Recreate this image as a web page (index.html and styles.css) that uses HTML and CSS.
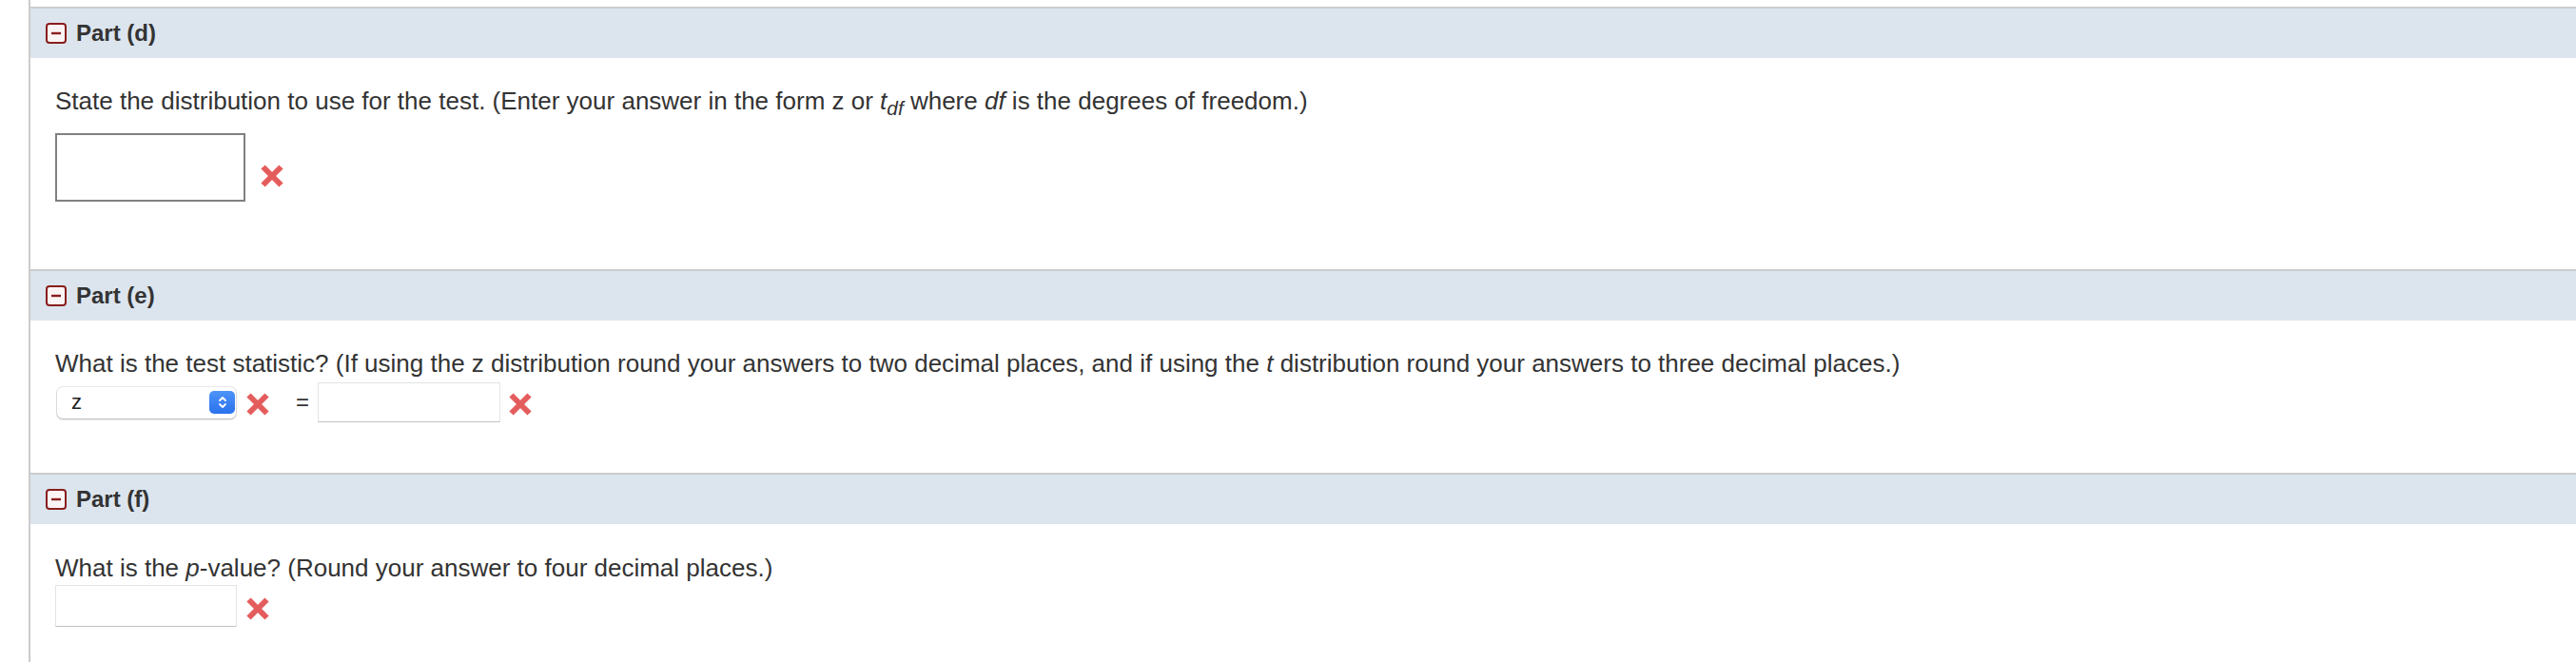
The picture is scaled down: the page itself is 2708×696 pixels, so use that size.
FILE: index.html
```html
<!DOCTYPE html>
<html>
<head>
<meta charset="utf-8">
<link rel="stylesheet" href="styles.css">
</head>
<body>
<div class="page">
  <section class="part part-d">
    <div class="part-head">
      <svg class="toggle" viewBox="0 0 22 22" width="22" height="22"><rect x="1" y="1" width="20" height="20" rx="3" fill="#fbf4f4" stroke="#8a1d1d" stroke-width="2"/><line x1="6" y1="11" x2="16" y2="11" stroke="#8a1d1d" stroke-width="2.4"/></svg>
      <span class="part-title">Part (d)</span>
    </div>
    <div class="part-body">
      <p class="question">State the distribution to use for the test. (Enter your answer in the form z or <i>t</i><sub><i>df</i></sub> where <i>df</i> is the degrees of freedom.)</p>
      <div class="answer-row row-d">
        <div class="box-input"></div>
        <svg class="xmark" viewBox="0 0 26 26" width="26" height="26"><path d="M3.5 3.5 L22.5 22.5 M22.5 3.5 L3.5 22.5" stroke="#e45d5d" stroke-width="6" fill="none"/></svg>
      </div>
    </div>
  </section>

  <section class="part part-e">
    <div class="part-head">
      <svg class="toggle" viewBox="0 0 22 22" width="22" height="22"><rect x="1" y="1" width="20" height="20" rx="3" fill="#fbf4f4" stroke="#8a1d1d" stroke-width="2"/><line x1="6" y1="11" x2="16" y2="11" stroke="#8a1d1d" stroke-width="2.4"/></svg>
      <span class="part-title">Part (e)</span>
    </div>
    <div class="part-body">
      <p class="question">What is the test statistic? (If using the z distribution round your answers to two decimal places, and if using the <i>t</i> distribution round your answers to three decimal places.)</p>
      <div class="answer-row row-e">
        <div class="select">
          <span class="select-value">z</span>
          <span class="stepper"><svg viewBox="0 0 12 18" width="12" height="18"><path d="M3 7 L6 4 L9 7 M3 11 L6 14 L9 11" stroke="#fff" stroke-width="1.8" fill="none" stroke-linecap="round" stroke-linejoin="round"/></svg></span>
        </div>
        <svg class="xmark" viewBox="0 0 26 26" width="26" height="26"><path d="M3.5 3.5 L22.5 22.5 M22.5 3.5 L3.5 22.5" stroke="#e45d5d" stroke-width="6" fill="none"/></svg>
        <span class="equals">=</span>
        <div class="text-input"></div>
        <svg class="xmark" viewBox="0 0 26 26" width="26" height="26"><path d="M3.5 3.5 L22.5 22.5 M22.5 3.5 L3.5 22.5" stroke="#e45d5d" stroke-width="6" fill="none"/></svg>
      </div>
    </div>
  </section>

  <section class="part part-f">
    <div class="part-head">
      <svg class="toggle" viewBox="0 0 22 22" width="22" height="22"><rect x="1" y="1" width="20" height="20" rx="3" fill="#fbf4f4" stroke="#8a1d1d" stroke-width="2"/><line x1="6" y1="11" x2="16" y2="11" stroke="#8a1d1d" stroke-width="2.4"/></svg>
      <span class="part-title">Part (f)</span>
    </div>
    <div class="part-body">
      <p class="question">What is the <i>p</i>-value? (Round your answer to four decimal places.)</p>
      <div class="answer-row row-f">
        <div class="text-input"></div>
        <svg class="xmark" viewBox="0 0 26 26" width="26" height="26"><path d="M3.5 3.5 L22.5 22.5 M22.5 3.5 L3.5 22.5" stroke="#e45d5d" stroke-width="6" fill="none"/></svg>
      </div>
    </div>
  </section>
</div>
</body>
</html>
```
FILE: styles.css
```css
html, body {
  margin: 0;
  padding: 0;
  background: #fff;
}
body {
  font-family: "Liberation Sans", Arial, Helvetica, sans-serif;
  color: #333;
}
.page {
  margin-left: 30px;
  border-left: 2px solid #cccccc;
  padding-top: 7px;
  min-height: 689px;
}
.part {
  border-top: 2px solid #cccccc;
}
.part-head {
  height: 52px;
  background: #dce5ee;
  display: flex;
  align-items: center;
  padding-left: 16px;
  gap: 10px;
}
.toggle {
  display: block;
  flex: none;
}
.part-title {
  font-weight: bold;
  font-size: 24px;
  color: #333;
}
.part-body {
  padding-left: 26px;
}
.question {
  margin: 0;
  font-size: 26px;
  line-height: 28px;
  color: #333;
}
.question sub {
  font-size: 0.8em;
  line-height: 0;
  vertical-align: -0.3em;
}
.answer-row {
  display: flex;
  align-items: center;
}
.xmark {
  display: block;
  flex: none;
}

/* Part d */
.part-d .part-body {
  height: 222px;
  padding-top: 31px;
  box-sizing: border-box;
}
.row-d {
  margin-top: 20px;
  align-items: flex-start;
}
.box-input {
  width: 200px;
  height: 72px;
  box-sizing: border-box;
  border: 2px solid #808080;
  background: #fff;
}
.row-d .xmark {
  margin-top: 32px;
  margin-left: 15px;
}

/* Part e */
.part-e .part-body {
  height: 160px;
  padding-top: 31px;
  box-sizing: border-box;
}
.row-e {
  margin-top: 6px;
  height: 42px;
}
.select {
  margin-left: 2px;
  width: 188px;
  height: 33px;
  box-sizing: border-box;
  border-radius: 6px;
  background: #fff;
  box-shadow: 0 0 0 1px rgba(0,0,0,0.08), 0 1px 2px rgba(0,0,0,0.25);
  display: flex;
  align-items: center;
  justify-content: space-between;
  padding: 0 1px 0 15px;
}
.select-value {
  font-size: 22px;
  color: #222;
}
.stepper {
  width: 27px;
  height: 24px;
  border-radius: 5px;
  background: linear-gradient(#4d93f8, #2b72ee);
  display: flex;
  align-items: center;
  justify-content: center;
}
.stepper svg {
  display: block;
}
.row-e .select + .xmark {
  margin-left: 10px;
  margin-top: 4px;
}
.equals {
  margin-left: 27px;
  margin-right: 9px;
  font-size: 24px;
  color: #333;
}
.text-input {
  width: 192px;
  height: 42px;
  box-sizing: border-box;
  border: 1px solid #e4e4e4;
  border-bottom-color: #c2c2c2;
  background: #fff;
}
.row-e .text-input + .xmark {
  margin-left: 8px;
  margin-top: 4px;
}

/* Part f */
.part-f .part-body {
  padding-top: 32px;
  padding-bottom: 30px;
}
.row-f {
  margin-top: 4px;
}
.row-f .text-input {
  width: 191px;
  height: 44px;
}
.row-f .xmark {
  margin-left: 9px;
  margin-top: 6px;
}
```
